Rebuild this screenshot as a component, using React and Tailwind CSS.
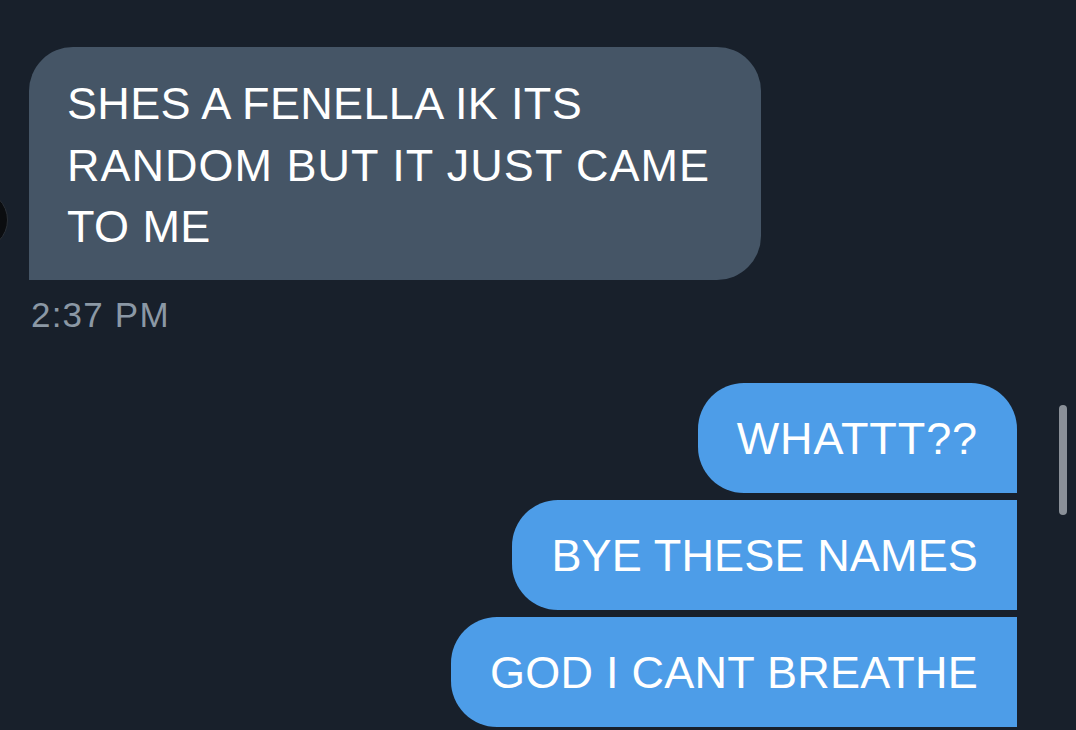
import React from 'react';

const font = { fontFamily: '"Liberation Sans", Arial, sans-serif' };

const sent = [
  { id: 1, text: 'WHATTT??', shape: 'rounded-[46px] rounded-br-none', track: 'tracking-[0.9px]' },
  { id: 2, text: 'BYE THESE NAMES', shape: 'rounded-l-[46px]', track: 'tracking-[0.15px]' },
  { id: 3, text: 'GOD I CANT BREATHE', shape: 'rounded-l-[46px]', track: 'tracking-[0.25px]' },
];

const App = () => {
  return (
    <div
      className="relative w-[1076px] h-[730px] overflow-hidden bg-[#18202b] text-white"
      style={font}
    >
      {/* edge of the other person's avatar */}
      <div className="absolute left-[-52px] top-[190px] w-[60px] h-[60px] rounded-full bg-[#0b0d10] border border-[#2a2f36]" />

      {/* scrollbar */}
      <div className="absolute right-[9px] top-[405px] w-[8px] h-[110px] rounded-full bg-[#8a9098]" />

      <div className="flex flex-col pt-[47px] pl-[29px]">
        <div className="w-[732px] h-[233px] bg-[#455566] rounded-[44px] rounded-bl-none pl-[38px] pt-[26px]">
          <p className="text-[45px] leading-[61.5px] whitespace-nowrap">
            <span className="tracking-[0.35px]">SHES A FENELLA IK ITS</span>
            <br />
            <span className="tracking-[1px]">RANDOM BUT IT JUST CAME</span>
            <br />
            <span className="tracking-[0.4px]">TO ME</span>
          </p>
        </div>
        <p className="mt-[15px] pl-[2px] text-[35px] leading-[40px] text-[#8b98a5] tracking-[1.2px]">
          2:37 PM
        </p>
      </div>

      <div className="flex flex-col items-end gap-[7px] pr-[59px] mt-[48px]">
        {sent.map((m) => (
          <div
            key={m.id}
            className={`h-[110px] flex items-center px-[39px] bg-[#4d9de8] ${m.shape}`}
          >
            <span className={`text-[45px] leading-none whitespace-nowrap ${m.track}`}>
              {m.text}
            </span>
          </div>
        ))}
      </div>
    </div>
  );
};

export default App;
